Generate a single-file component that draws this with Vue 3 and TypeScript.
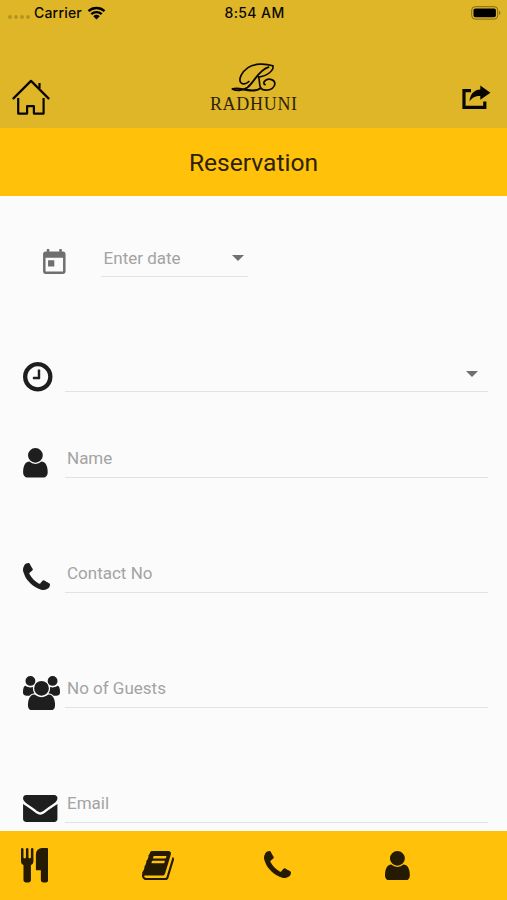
<script setup lang="ts">
import { ref } from 'vue'

interface Glyph {
  box: string
  w: number
  h: number
  d: string
}

type GlyphName = 'clock' | 'user' | 'phone' | 'users' | 'mail' | 'cutlery' | 'book'

const glyphs: Record<GlyphName, Glyph> = {
  clock: {
    box: '0 128 1536 1536', w: 29.5, h: 29.5,
    d: 'M896 544v448q0 14-9 23t-23 9h-320q-14 0-23-9t-9-23v-64q0-14 9-23t23-9h224v-352q0-14 9-23t23-9h64q14 0 23 9t9 23zm416 352q0-148-73-273t-198-198-273-73-273 73-198 198-73 273 73 273 198 198 273 73 273-73 198-198 73-273zm224 0q0 209-103 385.5t-279.5 279.5-385.5 103-385.5-103-279.5-279.5-103-385.5 103-385.5 279.5-279.5 385.5-103 385.5 103 279.5 279.5 103 385.5z',
  },
  user: {
    box: '0 128 1280 1536', w: 24.8, h: 29.5,
    d: 'M1280 1399q0 109-62.5 187t-150.5 78h-854q-88 0-150.5-78t-62.5-187q0-85 8.5-160.5t31.5-152 58.5-131 94-89 134.5-34.5q131 128 313 128t313-128q76 0 134.5 34.5t94 89 58.5 131 31.5 152 8.5 160.5zm-256-887q0 159-112.5 271.5t-271.5 112.5-271.5-112.5-112.5-271.5 112.5-271.5 271.5-112.5 271.5 112.5 112.5 271.5z',
  },
  phone: {
    box: '0 128 1408 1536', w: 27, h: 29.5,
    d: 'M1408 1240q0 27-10 70.5t-21 68.5q-21 50-122 106-94 51-186 51-27 0-53-3.5t-57.5-12.5-47-14.5-55.5-20.5-49-18q-98-35-175-83-127-79-264-216t-216-264q-48-77-83-175-3-9-18-49t-20.5-55.5-14.5-47-12.5-57.5-3.5-53q0-92 51-186 56-101 106-122 25-11 68.5-21t70.5-10q14 0 21 3 18 6 53 76 11 19 30 54t35 63.5 31 53.5q3 4 17.5 25t21.5 35.5 7 28.5q0 20-28.5 50t-62 55-62 53-28.5 46q0 9 5 22.5t8.5 20.5 14 24 11.5 19q76 137 174 235t235 174q2 1 19 11.5t24 14 20.5 8.5 22.5 5q18 0 46-28.5t53-62 55-62 50-28.5q14 0 28.5 7t35.5 21.5 25 17.5q25 15 53.5 31t63.5 35 54 30q70 35 76 53 3 7 3 21z',
  },
  users: {
    box: '0 0 1920 1792', w: 37, h: 34.5,
    d: 'M593 896q-162 5-265 128h-134q-82 0-138-40.5t-56-118.5q0-353 124-353 6 0 43.5 21t97.5 42.5 119 21.5q67 0 133-23-5 37-5 66 0 139 81 256zm1071 637q0 120-73 189.5t-194 69.5h-874q-121 0-194-69.5t-73-189.5q0-53 3.5-103.5t14-109 26.5-108.5 43-97.5 62-81 85.5-53.5 111.5-20q10 0 43 21.5t73 48 107 48 135 21.5 135-21.5 107-48 73-48 43-21.5q61 0 111.5 20t85.5 53.5 62 81 43 97.5 26.5 108.5 14 109 3.5 103.5zm-1024-1277q0 106-75 181t-181 75-181-75-75-181 75-181 181-75 181 75 75 181zm704 384q0 159-112.5 271.5t-271.5 112.5-271.5-112.5-112.5-271.5 112.5-271.5 271.5-112.5 271.5 112.5 112.5 271.5zm576 225q0 78-56 118.5t-138 40.5h-134q-103-123-265-128 81-117 81-256 0-29-5-66 66 23 133 23 59 0 119-21.5t97.5-42.5 43.5-21q124 0 124 353zm-128-609q0 106-75 181t-181 75-181-75-75-181 75-181 181-75 181 75 75 181z',
  },
  mail: {
    box: '0 256 1792 1408', w: 34.5, h: 27,
    d: 'M1792 710v794q0 66-47 113t-113 47h-1472q-66 0-113-47t-47-113v-794q44 49 101 87 362 246 497 345 57 42 92.5 65.5t94.5 48 110 24.5h2q51 0 110-24.5t94.5-48 92.5-65.5q170-123 498-345 57-39 100-87zm0-294q0 79-49 151t-122 123q-376 261-468 325-10 7-42.5 31t-54 38.5-52 32.5-57.5 27-50 9h-2q-23 0-50-9t-57.5-27-52-32.5-54-38.5-42.5-31q-91-64-262-182.5t-205-142.5q-62-42-117-115.5t-55-136.5q0-78 41.5-130t118.5-52h1472q65 0 112.5 47t47.5 113z',
  },
  cutlery: {
    box: '0 64 1408 1792', w: 27.3, h: 34.5,
    d: 'M640 128v640q0 61-35.5 111t-92.5 70v779q0 52-38 90t-90 38h-128q-52 0-90-38t-38-90v-779q-57-20-92.5-70t-35.5-111v-640q0-26 19-45t45-19 45 19 19 45v416q0 26 19 45t45 19 45-19 19-45v-416q0-26 19-45t45-19 45 19 19 45v416q0 26 19 45t45 19 45-19 19-45v-416q0-26 19-45t45-19 45 19 19 45zm768 0v1600q0 52-38 90t-90 38h-128q-52 0-90-38t-38-90v-512h-224q-13 0-22.5-9.5t-9.5-22.5v-800q0-132 94-226t226-94h256q26 0 45 19t19 45z',
  },
  book: {
    box: '0 128 1664 1536', w: 32, h: 29.5,
    d: 'M1639 478q40 57 18 129l-275 906q-19 64-76.5 107.5t-122.5 43.5h-923q-77 0-148.5-53.5t-99.5-131.5q-24-67-2-127 0-4 3-27t4-37q1-8-3-21.5t-3-19.5q2-11 8-21t16.5-23.5 16.5-23.5q23-38 45-91.5t30-91.5q3-10 .5-30t-.5-28q3-11 17-28t17-23q21-36 42-92t25-90q1-9-2.5-32t.5-28q4-13 22-30.5t22-22.5q19-26 42.5-84.5t27.5-96.5q1-8-3-25.5t-2-26.5q2-8 9-18t18-23 17-21q8-12 16.5-30.5t15-35 16-36 19.5-32 26.5-23.5 36-11.5 47.5 5.5l-1 3q38-9 51-9h761q74 0 114 56t18 130l-274 906q-36 119-71.5 153.5t-128.5 34.5h-869q-27 0-38 15-11 16-1 43 24 70 144 70h923q29 0 56-15.5t35-41.5l300-987q7-22 5-57 38 15 59 43zm-1064 2q-4 13 2 22.5t20 9.5h608q13 0 25.5-9.5t16.5-22.5l21-64q4-13-2-22.5t-20-9.5h-608q-13 0-25.5 9.5t-16.5 22.5zm-83 256q-4 13 2 22.5t20 9.5h608q13 0 25.5-9.5t16.5-22.5l21-64q4-13-2-22.5t-20-9.5h-608q-13 0-25.5 9.5t-16.5 22.5z',
  },
}

const fields = ref<{ icon: GlyphName; label: string; value: string }[]>([
  { icon: 'user', label: 'Name', value: '' },
  { icon: 'phone', label: 'Contact No', value: '' },
  { icon: 'users', label: 'No of Guests', value: '' },
  { icon: 'mail', label: 'Email', value: '' },
])

const tabs: GlyphName[] = ['cutlery', 'book', 'phone', 'user']
</script>

<template>
  <div class="screen">
    <header class="header">
      <div class="status">
        <div class="carrier">
          <span class="dots"><i v-for="n in 4" :key="n" /></span>
          <span>Carrier</span>
          <svg class="wifi" width="19" height="14" viewBox="0 0 18 14">
            <path d="M1 5.2A11.8 11.8 0 0 1 17 5.2M3.8 8.1A7.8 7.8 0 0 1 14.2 8.1" fill="none" stroke="#000" stroke-width="2.4" />
            <path d="M5.8 10.2a4.8 4.8 0 0 1 6.4 0L9 13.6z" />
          </svg>
        </div>
        <span class="clock">8:54 AM</span>
        <svg class="battery" width="30" height="14" viewBox="0 0 30 14">
          <rect x=".7" y=".7" width="26" height="12.4" rx="3.4" fill="none" stroke="#806817" stroke-width="1" />
          <rect x="2.5" y="2.5" width="22.4" height="8.8" rx="1.8" />
          <path d="M28.2 4.8q2.4 2.1 0 4.2z" fill="#806817" />
        </svg>
      </div>
      <div class="brandbar">
        <svg class="home" width="38" height="37" viewBox="0 0 38 37" fill="none" stroke="#080600" stroke-width="2.2" stroke-linejoin="round">
          <path d="M1.5 19.4 19 1.9l17.5 17.5" stroke-linecap="round" />
          <path d="M27.5 9.4V4" />
          <path d="M6.2 19v15.6h8.9v-7.4h6.8v7.4h9.7V19" />
        </svg>
        <div class="logo">
          <svg width="46" height="30" viewBox="0 0 46 30" fill="none" stroke="#0b0800" stroke-linecap="round">
            <path d="M41.8 2.8C34 .4 23.5.3 17 4.6 10.5 9 7.6 16.2 9.6 19.4c1.6 2.4 5.5 1.9 8.3-.9" stroke-width="1.7" />
            <path d="M41.8 2.8c1.6 4.4-5.6 10.4-14.3 11.2" stroke-width="1.6" />
            <path d="M37.5 4.2C27 7.5 23.5 19 16.5 24.4 11.5 28 5 27.8 1.8 26.2" stroke-width="1.8" />
            <path d="M1.6 26c4.4-1.4 9.8.3 15.4 1.1 6 .8 9.5.3 12-1.6" stroke-width="2.1" />
            <path d="M27.5 14c2.2 3.6-1.5 12.8 7.2 13.2 5.2.2 9.3-3 9.2-6.6-.2-4.1-5.6-5.5-9.2-3.4-2.4 1.5-2.5 3.8-.6 4.4" stroke-width="1.7" />
          </svg>
          <span>RADHUNI</span>
        </div>
        <svg class="share" width="29" height="25" viewBox="0 0 29 25">
          <path d="M9 5.7H2V22.3H22.8V16.4" fill="none" stroke="#080600" stroke-width="3.2" />
          <path d="M18.3.6 28.4 7.7 18.3 14.8V11C13.4 10.9 10.4 12.3 7.5 16.5 8 9.5 11.6 5.1 18.3 4.6z" fill="#080600" />
        </svg>
      </div>
    </header>

    <h1 class="title">Reservation</h1>

    <main class="form">
      <div class="row date-row">
        <svg class="calendar" width="22.6" height="25" viewBox="3 1 18 20">
          <path fill="#6f6f6f" d="M19 3h-1V1h-2v2H8V1H6v2H5c-1.11 0-1.99.9-1.99 2L3 19c0 1.1.89 2 2 2h14c1.1 0 2-.9 2-2V5c0-1.1-.9-2-2-2zm0 16H5V8h14v11zM7 10h5v5H7z" />
        </svg>
        <div class="field select">
          <span>Enter date</span><i class="caret" />
        </div>
      </div>
      <div class="row time-row">
        <div class="icon">
          <svg :width="glyphs.clock.w" :height="glyphs.clock.h" :viewBox="glyphs.clock.box"><path :d="glyphs.clock.d" /></svg>
        </div>
        <div class="field select"><span></span><i class="caret" /></div>
      </div>
      <label v-for="f in fields" :key="f.label" class="row input-row">
        <div class="icon">
          <svg :width="glyphs[f.icon].w" :height="glyphs[f.icon].h" :viewBox="glyphs[f.icon].box"><path :d="glyphs[f.icon].d" /></svg>
        </div>
        <input v-model="f.value" class="field" type="text" :placeholder="f.label" />
      </label>
    </main>

    <nav class="tabs">
      <div v-for="t in tabs" :key="t" class="tab">
        <svg :width="glyphs[t].w" :height="glyphs[t].h" :viewBox="glyphs[t].box" preserveAspectRatio="none"><path :d="glyphs[t].d" /></svg>
      </div>
    </nav>
  </div>
</template>

<style>
body {
  margin: 0;
}
</style>

<style scoped>
.screen {
  display: flex;
  flex-direction: column;
  width: 100%;
  height: 900px;
  overflow: hidden;
  background: #fbfbfb;
  font-family: Roboto, sans-serif;
}
svg {
  display: block;
  flex: none;
}
.header {
  flex: none;
  height: 128px;
  background: #dfb628;
}
.status {
  display: grid;
  grid-template-columns: 1fr auto 1fr;
  align-items: center;
  height: 26px;
  padding: 0 6px 0 8px;
  font: 500 14px/26px Inter, sans-serif;
  letter-spacing: 0.2px;
  color: #0b0800;
}
.clock {
  letter-spacing: 0.4px;
}
.carrier {
  display: flex;
  align-items: center;
}
.dots {
  display: flex;
  gap: 2px;
  width: 26px;
  padding-top: 8px;
}
.dots i {
  width: 4px;
  height: 4px;
  border-radius: 50%;
  background: #b59424;
}
.wifi {
  margin-left: 5px;
}
.battery {
  justify-self: end;
}
.brandbar {
  display: grid;
  grid-template-columns: 1fr auto 1fr;
  align-items: end;
  height: 90px;
  padding: 0 16px;
}
.home {
  margin-left: -4px;
}
.logo {
  display: flex;
  flex-direction: column;
  align-items: center;
  padding-bottom: 1px;
  font: 18px/22px "Liberation Serif", serif;
  letter-spacing: 0.7px;
  color: #2a2208;
}
.logo span {
  margin-right: -0.7px;
}
.share {
  justify-self: end;
  margin-bottom: 6px;
}
.title {
  flex: none;
  margin: 0;
  height: 68px;
  background: #ffc10a;
  color: #2c2203;
  font-size: 24.6px;
  font-weight: 400;
  line-height: 69px;
  text-align: center;
}
.form {
  flex: 1;
  min-height: 0;
  overflow: hidden;
  padding: 35px 19px 0 23px;
}
.row {
  display: flex;
  align-items: flex-start;
  height: 60px;
  margin-bottom: 55px;
}
.date-row {
  margin-bottom: 56px;
  padding-left: 20px;
}
.time-row {
  margin-bottom: 26px;
}
.calendar {
  margin: 18px 35px 0 0;
}
.icon {
  display: flex;
  flex: none;
  align-items: center;
  width: 42px;
  height: 60px;
  fill: #1e1e1e;
}
.field {
  flex: 1;
  box-sizing: border-box;
  min-width: 0;
  height: 45px;
  margin: 0;
  padding: 6px 2px 0;
  border: 0;
  border-bottom: 1.5px solid #e2e2e2;
  outline: 0;
  border-radius: 0;
  background: none;
  color: #333;
  font: 17px/20px Roboto, sans-serif;
}
.field::placeholder {
  color: #a3a3a3;
  opacity: 1;
}
.select {
  display: flex;
  align-items: center;
  justify-content: space-between;
  padding-top: 10px;
  padding-right: 10px;
  color: #a3a3a3;
}
.date-row .field {
  flex: none;
  width: 147px;
  height: 46px;
  padding: 8px 4px 0 3px;
}
.caret {
  border: 6px solid transparent;
  border-top-color: #707070;
  border-bottom: 0;
}
.tabs {
  flex: none;
  display: grid;
  grid-template-columns: repeat(3, 121.3px) 1fr;
  height: 69px;
  box-sizing: border-box;
  padding-left: 21px;
  background: #ffc10a;
  fill: #241b02;
}
.tab {
  display: flex;
  align-items: center;
}
</style>
